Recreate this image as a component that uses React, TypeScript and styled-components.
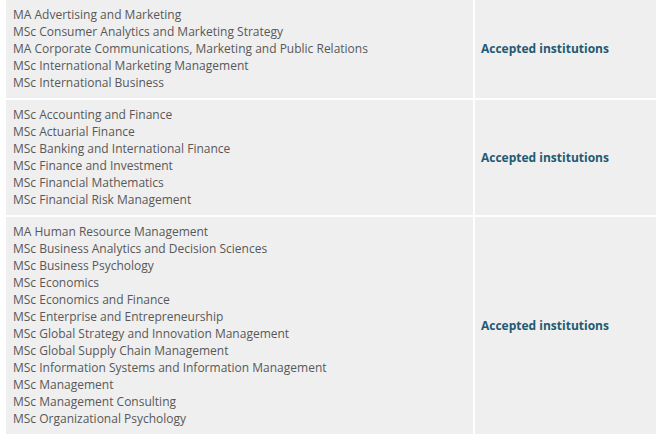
import React from "react";
import styled, { createGlobalStyle } from "styled-components";

const Global = createGlobalStyle`
  html, body { margin: 0; padding: 0; background: #ffffff; }
  body { font-family: "Open Sans", "Noto Sans", sans-serif; }
`;

const Table = styled.div`
  display: grid;
  grid-template-columns: 467px 1fr;
  column-gap: 2px;
  row-gap: 2px;
  margin-left: 6px;
  width: 650px;
`;

const Cell = styled.div`
  background: #efefef;
  padding: 6px 7px 7px;
`;

const ProgramCell = styled(Cell)`
  display: flex;
  flex-direction: column;
`;

const Program = styled.span`
  font-size: 12px;
  line-height: 17px;
  color: #585858;
  white-space: nowrap;
`;

const LinkCell = styled(Cell)`
  display: flex;
  align-items: center;
  padding-left: 6px;
`;

const Link = styled.a`
  font-size: 12px;
  font-weight: 700;
  color: #1f5a73;
  text-decoration: none;
`;

const groups: string[][] = [
  [
    "MA Advertising and Marketing",
    "MSc Consumer Analytics and Marketing Strategy",
    "MA Corporate Communications, Marketing and Public Relations",
    "MSc International Marketing Management",
    "MSc International Business",
  ],
  [
    "MSc Accounting and Finance",
    "MSc Actuarial Finance",
    "MSc Banking and International Finance",
    "MSc Finance and Investment",
    "MSc Financial Mathematics",
    "MSc Financial Risk Management",
  ],
  [
    "MA Human Resource Management",
    "MSc Business Analytics and Decision Sciences",
    "MSc Business Psychology",
    "MSc Economics",
    "MSc Economics and Finance",
    "MSc Enterprise and Entrepreneurship",
    "MSc Global Strategy and Innovation Management",
    "MSc Global Supply Chain Management",
    "MSc Information Systems and Information Management",
    "MSc Management",
    "MSc Management Consulting",
    "MSc Organizational Psychology",
  ],
];

export default function App() {
  return (
    <>
      <Global />
      <Table>
        {groups.map((g, i) => (
          <React.Fragment key={i}>
            <ProgramCell>
              {g.map((p) => (
                <Program key={p}>{p}</Program>
              ))}
            </ProgramCell>
            <LinkCell>
              <Link href="#">Accepted institutions</Link>
            </LinkCell>
          </React.Fragment>
        ))}
      </Table>
    </>
  );
}
